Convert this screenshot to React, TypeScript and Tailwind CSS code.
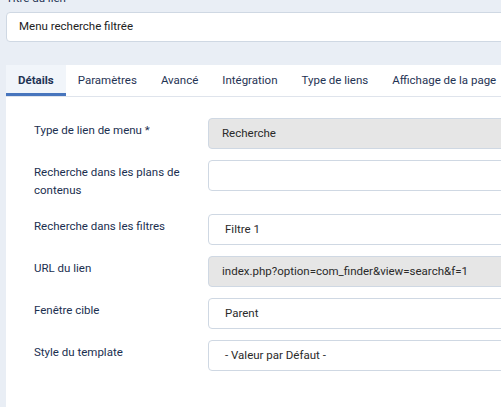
import React from "react";

type Field = {
  label: string;
  value: string;
  kind: "disabled" | "input" | "select";
};

const fields: Field[] = [
  { label: "Type de lien de menu *", value: "Recherche", kind: "disabled" },
  { label: "Recherche dans les plans de contenus", value: "", kind: "input" },
  { label: "Recherche dans les filtres", value: "Filtre 1", kind: "select" },
  { label: "URL du lien", value: "index.php?option=com_finder&view=search&f=1", kind: "disabled" },
  { label: "Fenêtre cible", value: "Parent", kind: "select" },
  { label: "Style du template", value: "- Valeur par Défaut -", kind: "select" },
];

const tabs = ["Détails", "Paramètres", "Avancé", "Intégration", "Type de liens", "Affichage de la page"];

export default function App() {
  return (
    <div
      className="w-[501px] h-[407px] overflow-hidden bg-[#e9eef5] pl-[6px]"
      style={{ fontFamily: "Roboto, 'Noto Sans', sans-serif" }}
    >
      {/* Titre */}
      <div className="text-[11.5px] leading-[16px] text-[#1f3354] mt-[-10px] mb-[6px]">Titre du lien</div>
      <div className="h-[30px] w-[520px] bg-white border border-[#cfd8e3] rounded-[4px] flex items-center pl-[12px] text-[11.5px] text-[#222]">
        Menu recherche filtrée
      </div>

      {/* Tabs */}
      <div className="mt-[23px] bg-white flex border-b border-[#dfe4ec] h-[32px] w-[520px]">
        {tabs.map((t, i) => (
          <div
            key={t}
            className={`px-[12px] flex items-center whitespace-nowrap text-[11.5px] text-[#1f3354] ${
              i === 0 ? "bg-[#f1f5fa] font-bold border-b-[3px] border-[#4775bd] pt-[3px]" : "font-normal"
            }`}
          >
            {t}
          </div>
        ))}
      </div>

      {/* Panel */}
      <div className="bg-white w-[520px] h-[320px] pt-[21px] pl-[28px]">
        {fields.map((f) => (
          <div key={f.label} className="flex items-start mb-[11px]">
            <div className="w-[174px] pr-[12px] pt-[4px] pb-[4px] text-[11.5px] leading-[17.5px] font-normal text-[#1b2f50]">
              {f.label}
            </div>
            <div
              className={`h-[31px] flex-1 rounded-[4px] border border-[#cfd8e3] flex items-center text-[11.5px] text-[#2a2a2a] ${
                f.kind === "disabled" ? "bg-[#e6e6e6] pl-[13px]" : "bg-white pl-[16px]"
              }`}
            >
              {f.value}
            </div>
          </div>
        ))}
      </div>
    </div>
  );
}
